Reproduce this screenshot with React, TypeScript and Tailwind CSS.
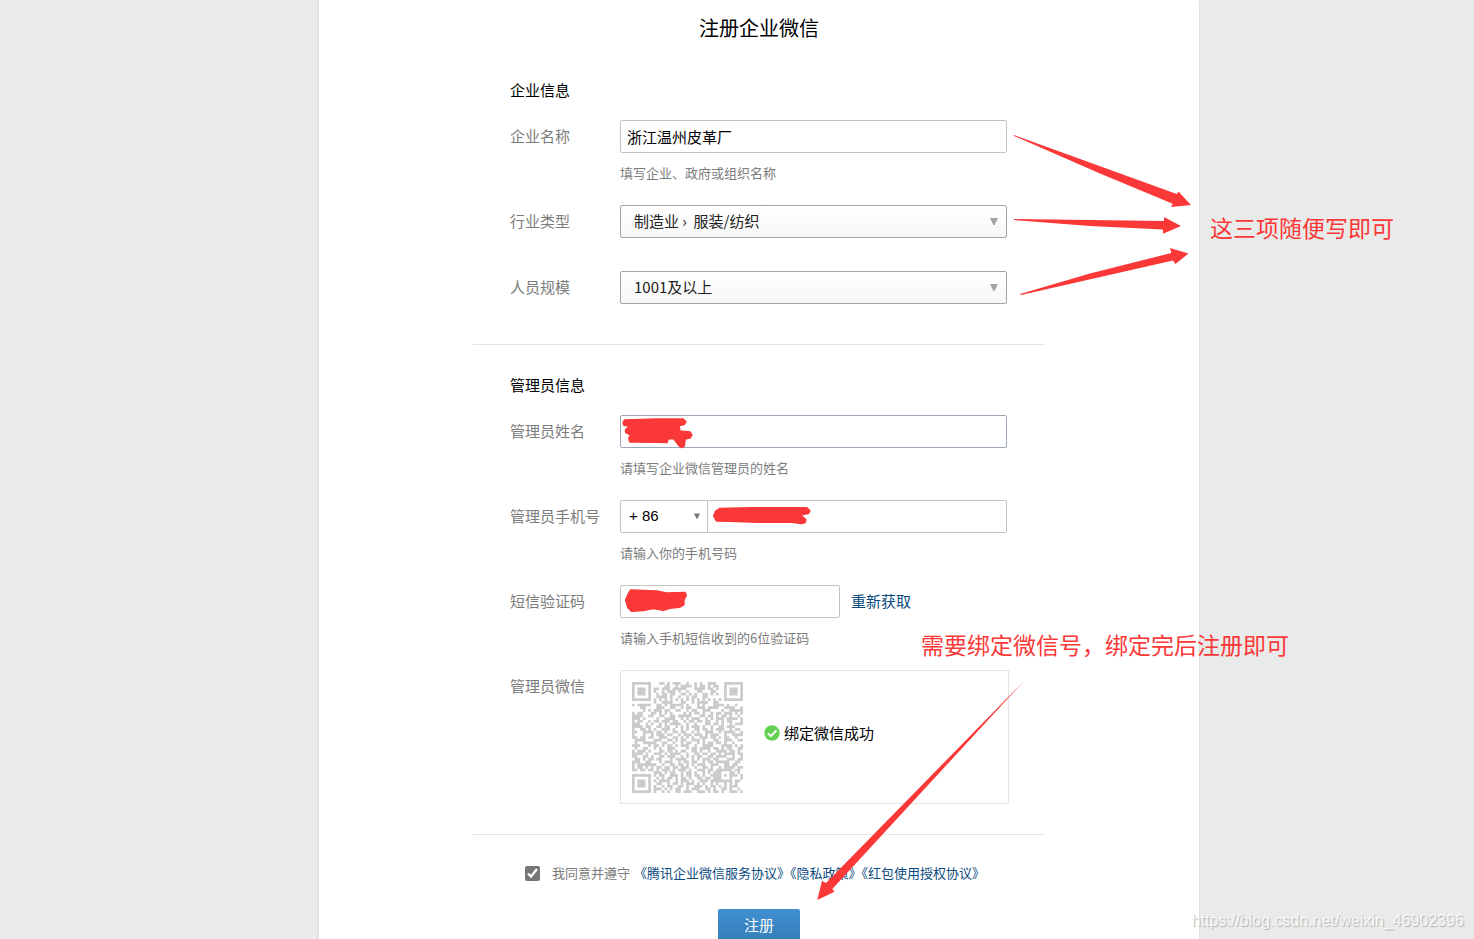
import { useState, type ReactNode } from "react";

const QR_ROWS = [
  "#######...##.#.###..#..#.#..###...#######",
  "#.....#.....##..#.####.#.##.#.##..#.....#",
  "#.###.#.##.###.#####...####.##.#..#.###.#",
  "#.###.#.#..#.###.#..#...##...##...#.###.#",
  "#.###.#..#.##.##..##.#.#..##.#.#..#.###.#",
  "#.....#..####.#..#..#.##..##......#.....#",
  "#######.#.#.#.#.#.#.#.#.#.#.#.#.#.#######",
  "........#..####...##..#.####..##.........",
  "#.#####..##.#.#####.#...#.#...####.#..#..",
  "...##....###..##..#.##..###.####..####..#",
  "....#.#.###.##..##..#.##..###....#..#####",
  "#.##...##.#.#.#....#.#.##.#..#.##.###.#.#",
  "####..##..##..##.#####...##.##.#.##.#..#.",
  "###.#....#..####..#.#.###..#.#.###.####.#",
  "#.##..#.##.###.##..#.##.##.##..#.#.##...#",
  "###..#.#..#.#.####..#..#...##.##.#..#.###",
  "####.##..##.##..#.#.#.###.#..#..##.###...",
  "#..##.#.#..###.#..#.#..##.##.#.###..#.##.",
  "##..####.##.#..##.##..#.#..###..#.####..#",
  "#...#..#.###.##..#.###.###.#.###..#..####",
  "##.##.##..###..##.#.#.#..###.##.#.##..#..",
  ".####...###..##.#.##..###.#...##..###..##",
  ".#..#####..##..#..#.##..#.#.##.##.#..#...",
  "###...#.##.#.##.#.###..#..####...####.#.#",
  ".#..##..#.#..###....#.##.####.##.#.##..##",
  "#.###.#...##.##.#.##..##.#..#..####.##.#.",
  "####.#..###.#.####..#..##.##.##.#.####.##",
  "##..##.#..##.###..#.#.#.##..##.####..#..#",
  ".##.#.##.##...#.####..#.#.###.##...###.##",
  "###..##...#.###..#.##.##..#.##.#####..##.",
  "#.#######..#..##.##.#.#.###..###..##.##..",
  "#.##.#.#.##.##.##.###..#..##.#..#.####.##",
  "##.##.##.#.###.#.###.#..###.##.######.##.",
  "........###.#.##..#.##.#..#.#.###...##.#.",
  "#######.#.##..###.#.##.##.#..####.#.###.#",
  "#.....#..#.#.##.#.##.#..##.##.###...#...#",
  "#.###.#.#.####..#.###.#..###.########.##.",
  "#.###.#..##..#.##.#.###.#.#..#.#..#.#.#..",
  "#.###.#.#..#.##..##.#..###.#.##.#.#.###..",
  "#.....#.###.#.#.##..#.###..##.#..##.#..#.",
  "#######.#..#.#..##.###..###.#.##.#..###.#",
];

const QR_PATH = QR_ROWS.map((row, y) =>
  row
    .split("")
    .map((cell, x) => (cell === "#" ? `M${x} ${y}h1v1h-1z` : ""))
    .join("")
).join("");

const inputClass =
  "h-[33px] rounded-xs border bg-white px-[6px] text-[15px] text-black outline-none";

interface RowProps {
  label: string;
  htmlFor?: string;
  hint?: string;
  children: ReactNode;
}

function Row({ label, htmlFor, hint, children }: RowProps) {
  return (
    <div className="flex">
      <label
        htmlFor={htmlFor}
        className="w-[110px] shrink-0 text-[15px] leading-8 text-[#7c7c7c]"
      >
        {label}
      </label>
      <div className="w-[387px]">
        {children}
        {hint && (
          <p className="mt-[10px] text-[13px] leading-5 text-[#7c7c7c]">
            {hint}
          </p>
        )}
      </div>
    </div>
  );
}

function Triangle({ className }: { className: string }) {
  return (
    <svg viewBox="0 0 8 7" className={className} aria-hidden="true">
      <path d="M0 0h8L4.6 7H3.4z" fill="currentColor" />
    </svg>
  );
}

function Dropdown({ id, options }: { id: string; options: string[] }) {
  return (
    <div className="relative">
      <select
        id={id}
        className="h-[33px] w-full appearance-none rounded-xs border border-[#a3a3a3] bg-linear-to-b from-white to-[#f7f7f7] px-[13px] text-[15px] text-[#222] outline-none"
      >
        {options.map((option) => (
          <option key={option}>{option}</option>
        ))}
      </select>
      <Triangle className="pointer-events-none absolute top-[13px] right-[9px] h-[7px] w-2 text-[#a3a3a3]" />
    </div>
  );
}

// Hand-drawn arrows and scribbles that sit on top of the form
function Markup() {
  return (
    <div className="pointer-events-none absolute top-0 left-0 text-[23px] leading-[30px] whitespace-nowrap text-[#fb3838]">
      <svg
        viewBox="319 0 880 939"
        className="h-[939px] w-[880px] max-w-none overflow-visible"
        fill="#fb3838"
        aria-hidden="true"
      >
        <path d="M1014 135L1176.7 194L1178.7 191.7L1191 205L1171 207L1172.7 203.7L1100 173.5L1014 136z" />
        <path d="M1014 219L1164 221V217L1181 226L1163 233.7V229.5L1090 226L1014 220z" />
        <path d="M1020 294L1090 273.5L1171.3 253L1170 248L1188.5 253.5L1175.5 264L1173 260.5L1021 295z" />
        <path d="M1024 681L826 883L822 880.7L817.3 900L834.5 891.7L832.3 889z" />
        <g strokeLinejoin="round" stroke="#fb3838" strokeWidth="6">
          <path
            transform="translate(490 370) scale(.3333)"
            d="M404 151L500 148L580 148L587 156L582 163L567 166L569 184L600 187L605 195L600 203L585 206L582 228L575 232L568 227L551 205L534 206L531 217L500 216L420 215L417 205L422 194L408 187L407 180L420 168L402 165L400 158z"
          />
          <path
            transform="translate(490 370) scale(.3333)"
            d="M672 438L677 425L690 416L780 414L950 414L959 422L955 430L930 434L947 449L945 457L935 460L900 455L800 456L720 453L680 452z"
          />
          <path
            transform="translate(490 570) scale(.3333)"
            d="M408 90L415 73L422 61L500 64L530 70L585 68L588 76L581 90L581 104L568 111L540 114L520 120L490 115L460 121L425 123L414 112z"
          />
        </g>
      </svg>
      <p className="absolute top-[212px] left-[891px]">这三项随便写即可</p>
      <p className="absolute top-[629px] left-[602px]">
        需要绑定微信号，绑定完后注册即可
      </p>
    </div>
  );
}

export default function App() {
  const [company, setCompany] = useState("浙江温州皮革厂");
  const [agreed, setAgreed] = useState(true);

  return (
    <div className="relative flex min-h-screen justify-center overflow-hidden bg-[#e8ebea] pl-[44px] font-['Noto_Sans_CJK_SC',sans-serif] text-black">
      <main className="relative w-[880px] shrink-0 bg-white pt-[13px] shadow-[0_0_2px_#ccc]">
        <h1 className="text-center text-xl leading-[30px]">注册企业微信</h1>

        <form onSubmit={(e) => e.preventDefault()}>
          {/* Company */}
          <section className="mx-auto mt-[37px] w-[572px] border-b border-[#e4e4e4] pb-10 pl-[37px]">
            <h2 className="mb-5 text-[15px] leading-5">企业信息</h2>
            <Row
              label="企业名称"
              htmlFor="company"
              hint="填写企业、政府或组织名称"
            >
              <input
                id="company"
                type="text"
                value={company}
                onChange={(e) => setCompany(e.target.value)}
                className={`${inputClass} w-full border-[#c3c3c3]`}
              />
            </Row>
            <div className="mt-[22px] flex flex-col gap-[33px]">
              <Row label="行业类型" htmlFor="industry">
                <Dropdown
                  id="industry"
                  options={["制造业 ›\u00a0 服装/纺织"]}
                />
              </Row>
              <Row label="人员规模" htmlFor="size">
                <Dropdown id="size" options={["1001及以上"]} />
              </Row>
            </div>
          </section>

          {/* Administrator */}
          <section className="mx-auto w-[572px] border-b border-[#e4e4e4] py-[30px] pl-[37px]">
            <h2 className="mb-5 text-[15px] leading-5">管理员信息</h2>
            <div className="flex flex-col gap-[22px]">
              <Row
                label="管理员姓名"
                htmlFor="admin"
                hint="请填写企业微信管理员的姓名"
              >
                <input
                  id="admin"
                  type="text"
                  className={`${inputClass} w-full border-[#9ca7b7]`}
                />
              </Row>
              <Row
                label="管理员手机号"
                htmlFor="phone"
                hint="请输入你的手机号码"
              >
                <div className="flex">
                  <div className="relative">
                    <select
                      aria-label="+ 86"
                      className="h-[33px] w-[88px] appearance-none rounded-l-xs border border-[#c3c3c3] bg-white px-2 font-['Liberation_Sans',sans-serif] text-[15px] outline-none"
                    >
                      <option>+ 86</option>
                    </select>
                    <Triangle className="pointer-events-none absolute top-[13px] right-[8px] h-[6px] w-[6px] text-[#777]" />
                  </div>
                  <input
                    id="phone"
                    type="tel"
                    className={`${inputClass} -ml-px flex-1 rounded-l-none border-[#c3c3c3]`}
                  />
                </div>
              </Row>
              <Row
                label="短信验证码"
                htmlFor="code"
                hint="请输入手机短信收到的6位验证码"
              >
                <div className="flex items-center gap-[11px]">
                  <input
                    id="code"
                    type="text"
                    className={`${inputClass} w-[220px] border-[#c3c3c3]`}
                  />
                  <a href="#" className="text-[15px] text-[#0b4a80]">
                    重新获取
                  </a>
                </div>
              </Row>
              <Row label="管理员微信">
                <div className="flex h-[134px] w-[389px] items-center border border-[#e4e4e4] pl-[11px]">
                  <svg
                    viewBox="0 0 41 41"
                    className="size-[111px]"
                    fill="#cbcbcb"
                    role="img"
                  >
                    <path d={QR_PATH} />
                  </svg>
                  <div className="mb-2 ml-[21px] flex items-center gap-1">
                    <svg
                      viewBox="0 0 16 16"
                      className="size-4"
                      aria-hidden="true"
                    >
                      <circle cx="8" cy="8" r="7.7" fill="#62d152" />
                      <path
                        d="M3.8 8.2l3 2.9 5.6-5.6"
                        fill="none"
                        stroke="#fff"
                        strokeWidth="2"
                      />
                    </svg>
                    <span className="text-[15px]">绑定微信成功</span>
                  </div>
                </div>
              </Row>
            </div>
          </section>

          <div className="mt-7 flex items-center justify-center pr-2 text-[13px] leading-5">
            <input
              id="agree"
              type="checkbox"
              checked={agreed}
              onChange={(e) => setAgreed(e.target.checked)}
              className="mr-3 size-[15px] accent-[#767676]"
            />
            <label htmlFor="agree" className="mr-1 text-[#7c7c7c]">
              我同意并遵守
            </label>
            <p className="text-[#0b4a80]">
              <a href="#">《腾讯企业微信服务协议》</a>
              <a href="#">《隐私政策》</a>
              <a href="#">《红包使用授权协议》</a>
            </p>
          </div>
          <button
            type="submit"
            className="mx-auto mt-[26px] block h-8 w-[82px] rounded-t-xs bg-linear-to-b from-[#428fd2] to-[#337fb8] text-[15px] text-white"
          >
            注册
          </button>
        </form>

        <Markup />
      </main>

      <p className="absolute right-[10px] bottom-2 font-['Liberation_Sans',sans-serif] text-base leading-6 text-white/80 [text-shadow:1px_1px_1px_#b0b0b0]">
        https://blog.csdn.net/weixin_46902396
      </p>
    </div>
  );
}
